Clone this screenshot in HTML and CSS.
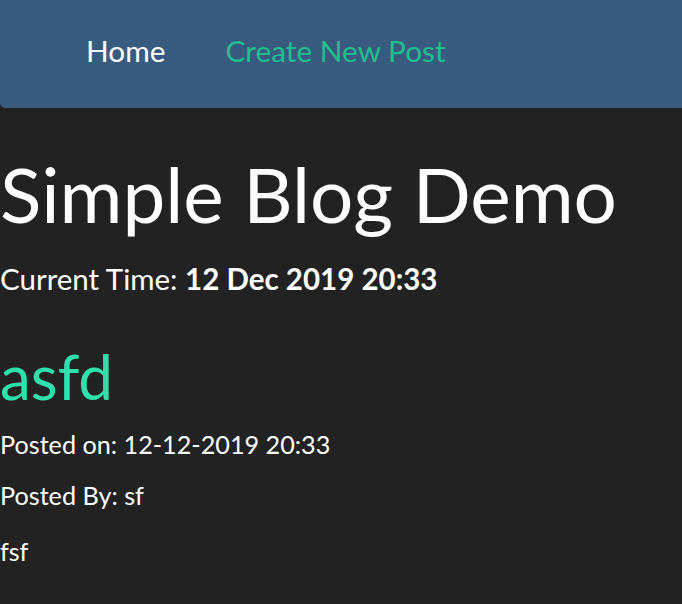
FILE: index.html
```html
<!DOCTYPE html>
<html lang="en">
<head>
<meta charset="utf-8">
<title>Simple Blog Demo</title>
<link rel="stylesheet" href="styles.css">
</head>
<body>
<nav class="navbar">
  <a class="nav-link active" href="#">Home</a>
  <a class="nav-link" href="#">Create New Post</a>
</nav>
<main class="container">
  <h1 class="title">Simple Blog Demo</h1>
  <p class="time">Current Time: <strong>12 Dec 2019 20:33</strong></p>
  <article class="post">
    <h2 class="post-title">asfd</h2>
    <p class="meta">Posted on: 12-12-2019 20:33</p>
    <p class="meta">Posted By: sf</p>
    <p class="body">fsf</p>
  </article>
</main>
</body>
</html>
```
FILE: styles.css
```css
html, body {
  margin: 0;
  padding: 0;
}
body {
  background: #222222;
  color: #ffffff;
  font-family: Lato, "Noto Sans", sans-serif;
  font-size: 25px;
  line-height: 1.5;
}
.navbar {
  background: #395b7f;
  height: 108px;
  display: flex;
  align-items: center;
  gap: 60px;
  padding: 0 0 6px 86px;
  box-sizing: border-box;
  border-bottom-left-radius: 5px;
}
.nav-link {
  text-decoration: none;
  color: #1dbf8e;
  font-size: 29.8px;
}
.nav-link.active {
  color: #ffffff;
}
.container {
  padding: 0;
}
.title {
  margin: 40px 0 0;
  font-size: 76.5px;
  font-weight: 400;
  line-height: 1.2;
}
.time {
  margin: 17px 0 0;
  font-size: 29.5px;
}
.time strong {
  font-weight: 700;
}
.post-title {
  margin: 38px 0 0;
  font-size: 62px;
  font-weight: 400;
  line-height: 1.2;
  color: #2ee0ab;
}
.meta {
  margin: 13px 0 0;
  font-size: 25.2px;
}
.body {
  margin: 18px 0 0;
}
```
